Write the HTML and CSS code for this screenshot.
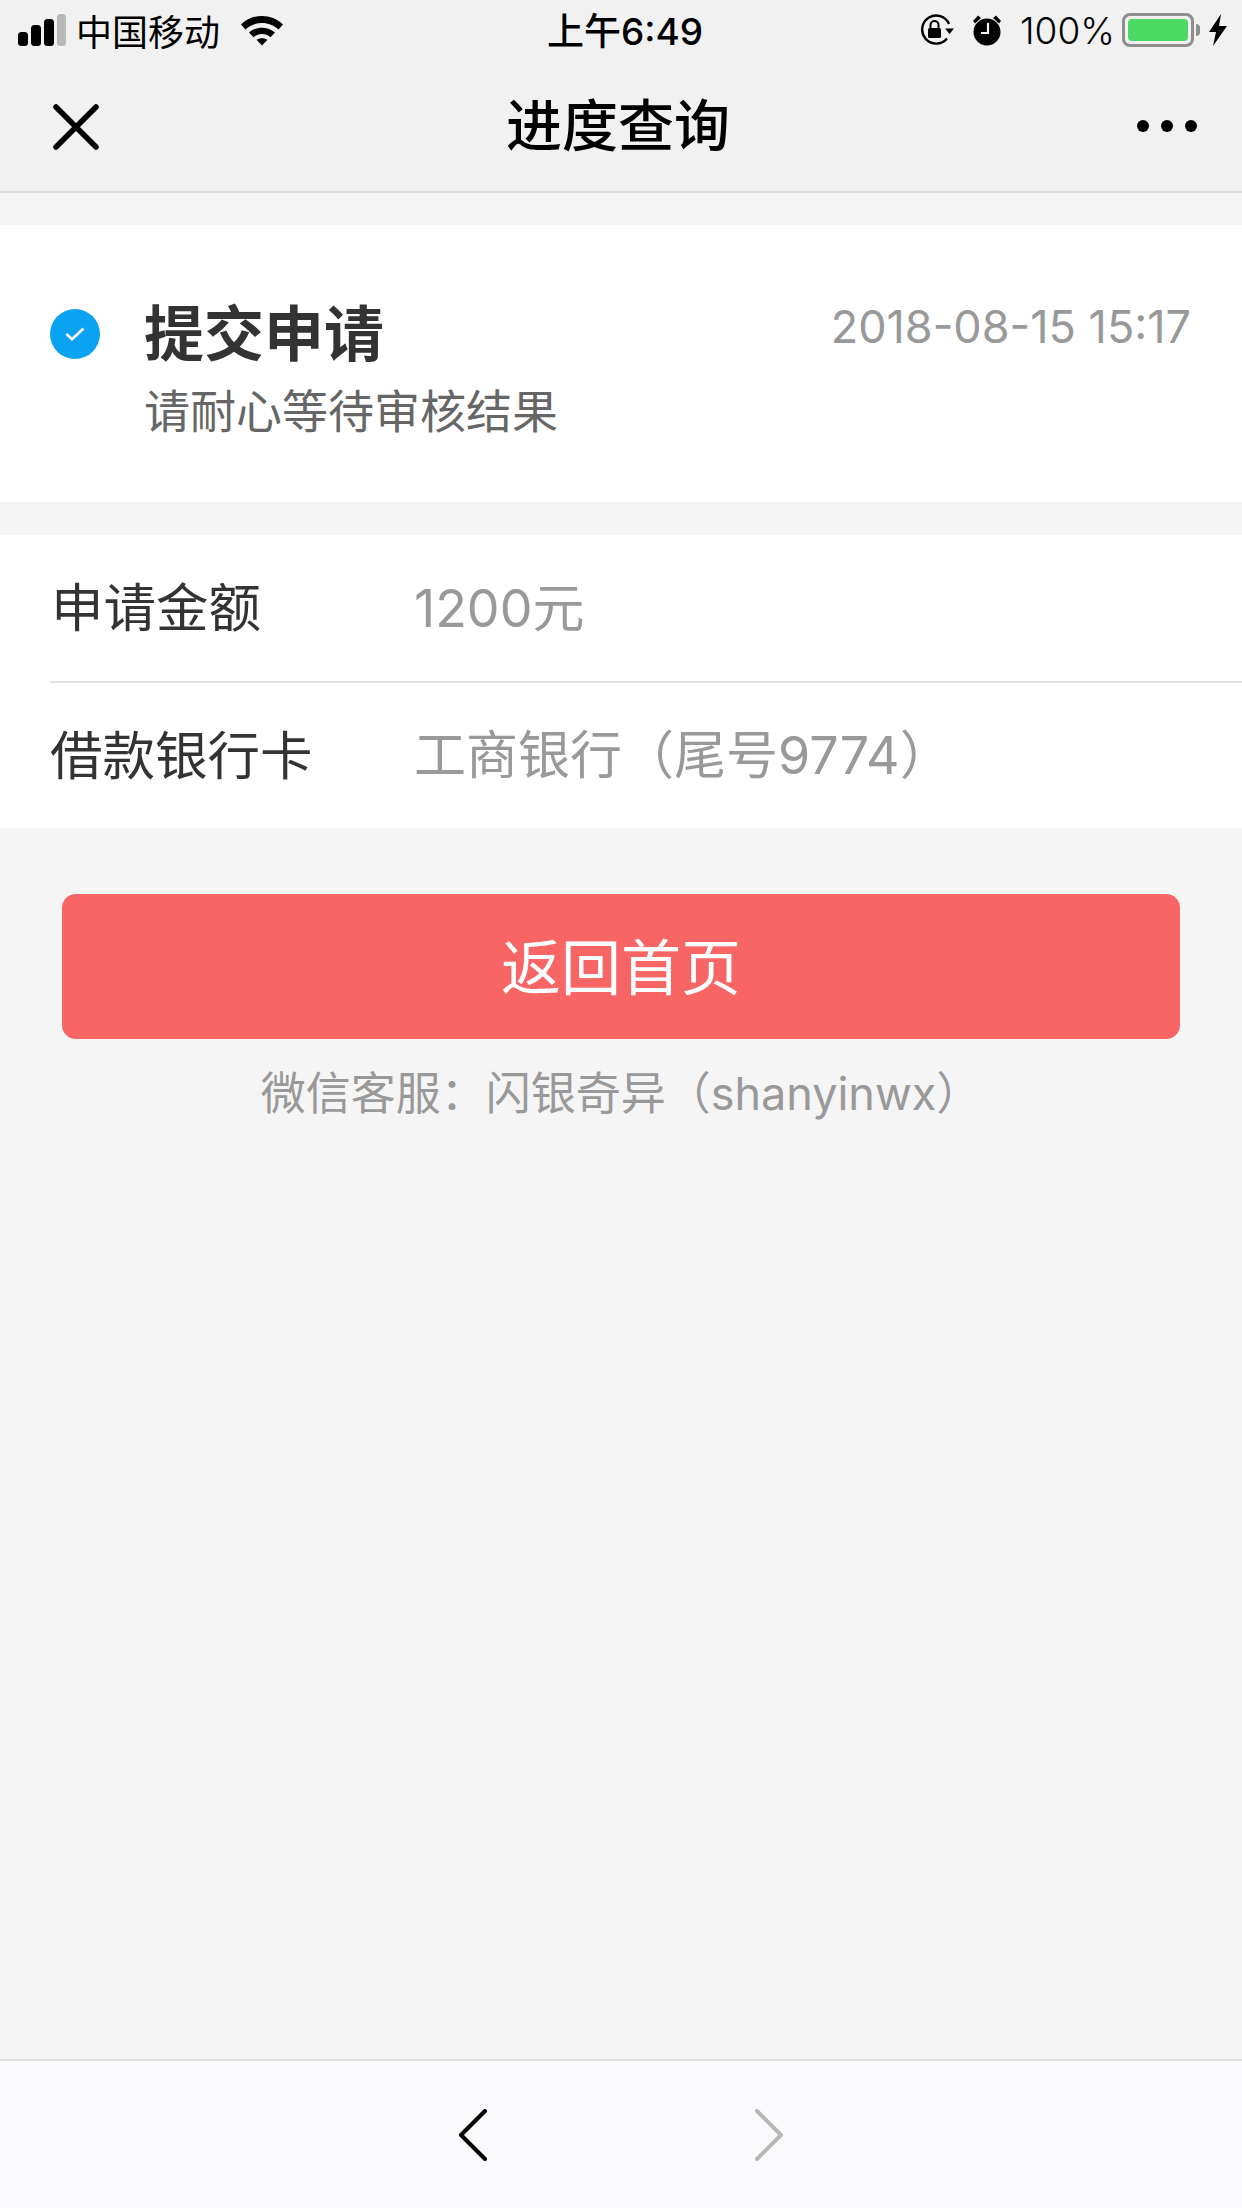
FILE: index.html
```html
<!doctype html>
<html>

<head>
    <title>进度查询</title>
    <meta charset='utf-8'/>
    <link rel="stylesheet" href="styles.css">
</head>

<body>
    <div id="page">
        <div id="top">
            <div id="status">
                <div class="side">
                    <svg class="signal" width="50" height="32" viewBox="0 0 50 32">
                        <rect x="0" y="18" width="10" height="14" rx="3.5" fill="#000"/>
                        <rect x="13" y="11" width="10" height="21" rx="3.5" fill="#000"/>
                        <rect x="26" y="5" width="10" height="27" rx="3.5" fill="#000"/>
                        <rect x="39" y="0" width="9" height="32" rx="3.5" fill="#b8b8b8"/>
                    </svg>
                    <span class="carrier">中国移动</span>
                    <svg class="wifi" width="44" height="32" viewBox="0 0 44 32">
                        <path d="M1 10.500C12.500 -0.800 31.500 -0.800 43 10.500L38.500 15.500C29.500 6.800 14.500 6.800 5.500 15.500Z" fill="#000"/>
                        <path d="M9 18.500C16 12 28 12 35 18.500L30.500 23.300C25.500 19 18.500 19 13.500 23.300Z" fill="#000"/>
                        <path d="M16.500 25.800C19.500 23.600 24.500 23.600 27.500 25.800L22 31.500Z" fill="#000"/>
                    </svg>
                </div>
                <div class="clock">上午6:49</div>
                <div class="side right">
                    <svg class="lock" width="36" height="32" viewBox="0 0 36 32">
                        <path d="M28 24.500A14 14 0 1 1 30 10" fill="none" stroke="#000" stroke-width="2.400"/>
                        <path d="M26 14.500H35L30.500 20Z" fill="#000"/>
                        <rect x="9" y="14" width="13" height="10" rx="1.500" fill="#000"/>
                        <path d="M11.500 14V11A4 4 0 0 1 19.500 11V14" fill="none" stroke="#000" stroke-width="2"/>
                    </svg>
                    <svg class="alarm" width="30" height="32" viewBox="0 0 30 32">
                        <circle cx="15" cy="18" r="13.500" fill="#000"/>
                        <path d="M1 7L6 1.500L9 4L3 9.500Z M29 7L24 1.500L21 4L27 9.500Z" fill="#000"/>
                        <path d="M16 9V19H9" fill="none" stroke="#f1f1f1" stroke-width="2.200"/>
                    </svg>
                    <span class="percent">100%</span>
                    <div class="battery"><div class="level"></div></div>
                    <div class="nub"></div>
                    <svg class="bolt" width="20" height="32" viewBox="0 0 20 32">
                        <path d="M13 0L1 18H8L5 32L19 12H11Z" fill="#000"/>
                    </svg>
                </div>
            </div>
            <div id="nav">
                <svg class="close" width="46" height="46" viewBox="0 0 46 46">
                    <path d="M3 3L43 43M43 3L3 43" stroke="#000" stroke-width="5.500" stroke-linecap="round"/>
                </svg>
                <h1>进度查询</h1>
                <div class="dots"><i></i><i></i><i></i></div>
            </div>
        </div>

        <div class="card step">
            <div class="tick">
                <svg width="20" height="14" viewBox="0 0 20 14">
                    <path d="M1.500 7L7 12.200L18.500 1.500" fill="none" stroke="#fff" stroke-width="2.600"/>
                </svg>
            </div>
            <div class="step-text">
                <h2>提交申请</h2>
                <p>请耐心等待审核结果</p>
            </div>
            <div class="when">2018-08-15 15:17</div>
        </div>

        <div class="card info">
            <div class="row">
                <span class="label first">申请金额</span>
                <span class="value">1200元</span>
            </div>
            <div class="row">
                <span class="label">借款银行卡</span>
                <span class="value">工商银行（尾号9774）</span>
            </div>
        </div>

        <div id="back">返回首页</div>
        <div id="service">微信客服：闪银奇异（shanyinwx）</div>

        <div id="toolbar">
            <svg width="28" height="52" viewBox="0 0 28 52">
                <path d="M26 2L2 26L26 50" fill="none" stroke="#000" stroke-width="4" stroke-linecap="round" stroke-linejoin="round"/>
            </svg>
            <svg width="28" height="52" viewBox="0 0 28 52">
                <path d="M2 2L26 26L2 50" fill="none" stroke="#b7b7b7" stroke-width="4" stroke-linecap="round" stroke-linejoin="round"/>
            </svg>
        </div>
    </div>
</body>

</html>
```

FILE: styles.css
```css
*{padding:0;margin:0;box-sizing:border-box;}
body{
font-family:"Inter","Noto Sans CJK SC",sans-serif;
background:#f5f5f5;
}
#page{
display:flex;
flex-direction:column;
width:1242px;
height:2208px;
overflow:hidden;
}

/* status bar + nav */
#top{
background:#f1f1f1;
border-bottom:2px solid #dcdcdc;
height:193px;
}
#status{
display:flex;
justify-content:space-between;
align-items:center;
height:60px;
padding:0 14px 0 18px;
color:#000;
}
.side{
display:flex;
align-items:center;
flex:1;
}
.side.right{justify-content:flex-end;}
.carrier{font-size:36px;margin-left:8px;}
.wifi{margin-left:20px;}
.clock{font-size:37px;font-weight:500;margin:0 0 2px 4px;}
.lock{margin-right:17px;}
.percent{font-size:37px;font-weight:300;margin:0 7px 0 18px;}
.battery{
width:72px;
height:34px;
border:3px solid #8e8e8e;
border-radius:8px;
padding:3px;
}
.level{
width:100%;
height:100%;
background:#4cd964;
border-radius:4px;
}
.nub{
width:4px;
height:12px;
background:#8e8e8e;
border-radius:0 4px 4px 0;
margin-left:2px;
}
.bolt{margin-left:8px;}

#nav{
display:flex;
justify-content:space-between;
align-items:center;
height:131px;
padding:0 45px 0 53px;
}
.close{margin-top:2px;}
#nav h1{font-size:56px;font-weight:500;color:#000;margin-bottom:9px;}
.dots{display:flex;gap:12px;}
.dots i{
width:12px;
height:12px;
border-radius:50%;
background:#000;
}

/* cards */
.card{background:#fff;}
.step{
display:flex;
align-items:flex-start;
height:277px;
margin-top:32px;
padding:0 51px 0 50px;
}
.tick{
display:flex;
align-items:center;
justify-content:center;
width:50px;
height:50px;
margin-top:84px;
background:#0aa3f2;
border-radius:50%;
}
.step-text{margin-left:44px;margin-top:66px;}
.step-text h2{font-size:60px;line-height:86px;font-weight:700;color:#333;}
.step-text p{font-size:46px;line-height:66px;color:#666;margin-top:1px;}
.when{
margin-left:auto;
margin-top:74px;
font-size:45px;
line-height:56px;
color:#999;
}

.info{margin-top:33px;height:293px;}
.row{
display:flex;
align-items:center;
height:145px;
margin-left:50px;
padding-bottom:8px;
}
.row:first-child{border-bottom:2px solid #e4e4e4;height:148px;}
.label{width:364px;font-size:52.500px;color:#333;}
.label.first{padding-left:1px;}
.value{font-size:52px;color:#999;}

/* button */
#back{
display:flex;
align-items:center;
justify-content:center;
height:145px;
margin:66px 62px 0;
padding-bottom:7px;
background:#f86565;
border-radius:14px;
font-size:60px;
color:#fff;
}
#service{
margin-top:23px;
text-align:center;
font-size:45px;
line-height:64px;
color:#999;
}

/* bottom toolbar */
#toolbar{
display:flex;
justify-content:center;
align-items:center;
gap:268px;
margin-top:auto;
height:149px;
background:#fafafc;
border-top:2px solid #dfdfdf;
}
```
